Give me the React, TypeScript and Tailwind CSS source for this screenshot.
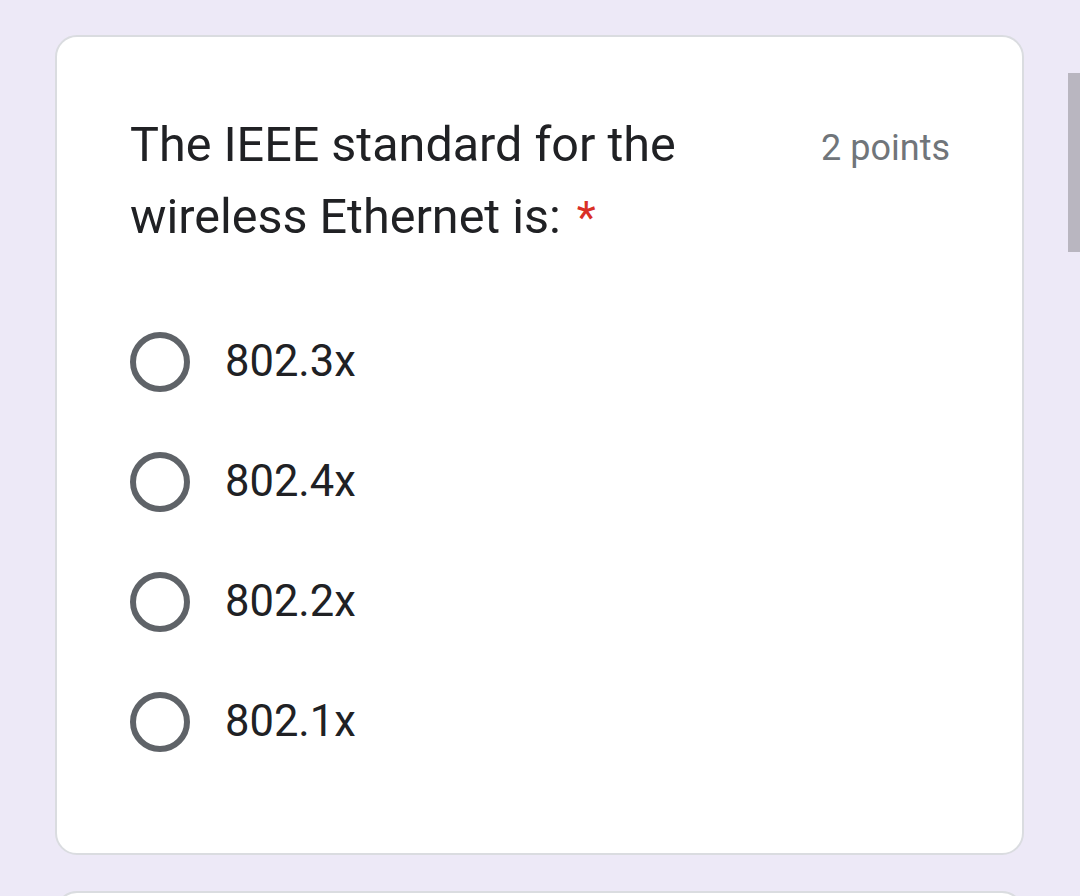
const options = ['802.3x', '802.4x', '802.2x', '802.1x'];

const Radio = () => (
  <div className="w-[60px] h-[60px] rounded-full border-[6px] border-[#5f6368] shrink-0"></div>
);

const App = () => {
  return (
    <div className="w-[1080px] h-[896px] overflow-hidden bg-[#ede9f7] relative" style={{ fontFamily: 'Roboto, "Noto Sans", sans-serif' }}>
      <div className="absolute right-0 top-[73px] w-[12px] h-[179px] bg-[#b9b6c0]"></div>
      <div className="pt-[35px] pl-[55px] pr-[56px]">
        <div className="bg-white border-2 border-[#dadce0] rounded-[22px] h-[820px] pt-[72px] pl-[73px] pr-[72px]">
          <div className="flex justify-between items-start">
            <div className="text-[48.5px] leading-[72px] text-[#202124] w-[600px]">
              <div>The IEEE standard for the</div>
              <div className="flex items-baseline">
                <span>wireless Ethernet is:</span>
                <span className="text-[#d93025] text-[44px] ml-[16px]">*</span>
              </div>
            </div>
            <div className="text-[36px] leading-[72px] pt-[3px] text-[#70757a]">2 points</div>
          </div>
          <div className="mt-[78px] flex flex-col gap-[60px]">
            {options.map((o) => (
              <div key={o} className="flex items-center gap-[35px] h-[60px]">
                <Radio />
                <span className="text-[43.5px] text-[#202124]">{o}</span>
              </div>
            ))}
          </div>
        </div>
        <div className="mt-[36px] bg-white border-2 border-[#dadce0] rounded-[22px] h-[200px]"></div>
      </div>
    </div>
  );
};

export default App;
